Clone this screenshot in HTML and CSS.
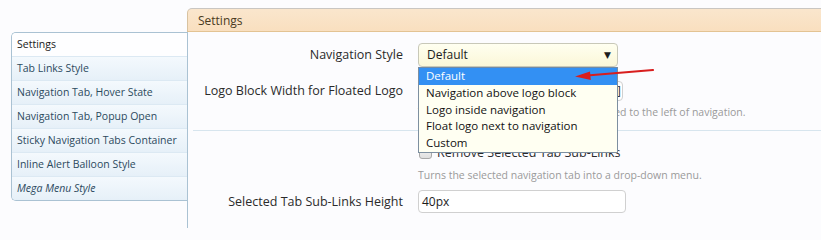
FILE: index.html
```html
<!DOCTYPE html>
<html>
<head>
<meta charset="utf-8">
<link rel="stylesheet" href="styles.css">
</head>
<body>
<div class="page">
  <div class="tabbar"><div class="tabhead">Settings</div></div>
  <div class="main">
    <ul class="sidebar">
      <li class="active">Settings</li>
      <li>Tab Links Style</li>
      <li>Navigation Tab, Hover State</li>
      <li>Navigation Tab, Popup Open</li>
      <li>Sticky Navigation Tabs Container</li>
      <li>Inline Alert Balloon Style</li>
      <li class="italic">Mega Menu Style</li>
    </ul>
    <div class="content">
      <div class="row row1">
        <div class="label">Navigation Style</div>
        <div class="control">
          <div class="select"><span>Default</span><span class="caret">&#9660;</span></div>
        </div>
      </div>
      <div class="row row2">
        <div class="label">Logo Block Width for Floated Logo</div>
        <div class="control">
          <div class="input small"><span class="spin">]</span></div>
          <div class="hint">This applies only if the logo block is floated to the left of navigation.</div>
        </div>
      </div>
      <div class="sep"></div>
      <div class="row row3">
        <div class="label"></div>
        <div class="control">
          <label class="check"><span class="box"></span>Remove Selected Tab Sub-Links</label>
          <div class="hint">Turns the selected navigation tab into a drop-down menu.</div>
        </div>
      </div>
      <div class="row row4">
        <div class="label">Selected Tab Sub-Links Height</div>
        <div class="control">
          <div class="input">40px</div>
        </div>
      </div>
    </div>
  </div>
  <ul class="dropdown">
    <li class="hl">Default</li>
    <li>Navigation above logo block</li>
    <li>Logo inside navigation</li>
    <li>Float logo next to navigation</li>
    <li>Custom</li>
  </ul>
  <svg class="arrow" width="90" height="16" viewBox="0 0 90 16">
    <path d="M80 3 L14 8.5" stroke="#d81e1e" stroke-width="2.2" fill="none" stroke-linecap="round"/>
    <path d="M2 9.5 L17 4.5 L17.8 13 Z" fill="#d81e1e"/>
  </svg>
</div>
</body>
</html>
```
FILE: styles.css
```css
html, body {
  margin: 0;
  padding: 0;
  background: #fcfcfe;
  font-family: "Open Sans", "DejaVu Sans", sans-serif;
  color: #2b2b2b;
}
.page {
  position: relative;
  width: 821px;
  height: 228px;
  overflow: hidden;
  padding-top: 8px;
  box-sizing: border-box;
}
.tabbar {
  padding-left: 187px;
}
.tabhead {
  height: 24px;
  line-height: 23px;
  border-top: 1px solid #c9c6c2;
  border-left: 1px solid #d8c2a0;
  border-top-left-radius: 5px;
  background: linear-gradient(#fae6cd, #f9dfbf);
  border-bottom: 1px solid #e3c393;
  padding-left: 10px;
  font-size: 12px;
  color: #4a3a22;
  box-sizing: border-box;
}
.main {
  display: flex;
  align-items: flex-start;
}
.sidebar {
  list-style: none;
  margin: 0 0 0 11px;
  padding: 0;
  width: 176px;
  border: 1px solid #aac2d3;
  border-right: none;
  border-radius: 5px 0 0 5px;
  overflow: hidden;
  background: #eef5fb;
  box-sizing: border-box;
}
.sidebar li {
  height: 24px;
  line-height: 23px;
  padding-left: 5px;
  font-size: 10.5px;
  color: #2c4a5e;
  border-top: 1px solid #dce9f3;
  box-sizing: border-box;
  background: linear-gradient(#f4f9fd, #e6f0f8);
  white-space: nowrap;
}
.sidebar li:first-child { border-top: none; height: 23px; }
.sidebar li.active {
  background: #fefeff;
  color: #1a1a1a;
}
.sidebar li.italic { font-style: italic; }
.content {
  flex: 1;
  height: 196px;
  border-left: 1px solid #aac2d3;
  box-sizing: border-box;
}
.row {
  display: flex;
  align-items: flex-start;
}
.label {
  width: 215px;
  text-align: right;
  font-size: 12.5px;
  color: #2b2b2b;
  flex: none;
}
.control {
  margin-left: 15px;
}
.row1 { padding-top: 11px; }
.row1 .label { line-height: 24px; }
.select {
  width: 200px;
  height: 24px;
  box-sizing: border-box;
  border: 1px solid #c8c8b8;
  border-radius: 4px;
  background: linear-gradient(#fffff0, #fbf7d8);
  font-size: 12px;
  line-height: 22px;
  padding-left: 8px;
  padding-right: 6px;
  display: flex;
  justify-content: space-between;
  color: #1c1c1c;
}
.caret { font-size: 9px; }
.row2 { padding-top: 14px; }
.row2 .label { line-height: 20px; }
.input {
  width: 208px;
  height: 23px;
  box-sizing: border-box;
  border: 1px solid #d0d0d0;
  border-radius: 4px;
  background: #fff;
  font-size: 12px;
  line-height: 21px;
  padding-left: 3px;
  color: #1c1c1c;
}
.input.small {
  width: 205px;
  height: 20px;
  text-align: right;
  padding-right: 1px;
  line-height: 17px;
}
.spin { font-size: 12px; color: #333; }
.hint {
  font-size: 10.5px;
  color: #9a9a9a;
  margin-top: 4px;
  white-space: nowrap;
}
.sep {
  height: 1px;
  background: #d7e5ee;
  margin: 11px 0 0 5px;
}
.row3 { padding-top: 15px; }
.check {
  display: flex;
  align-items: center;
  font-size: 12.5px;
  color: #2b2b2b;
  line-height: 14px;
}
.box {
  width: 11px;
  height: 10px;
  border: 1px solid #a8a8a8;
  border-radius: 3px;
  background: linear-gradient(#f4f4f4, #dedede);
  margin: 0 5px 0 1px;
}
.row3 .hint { margin-top: 8px; }
.row4 { padding-top: 8px; }
.row4 .label { line-height: 23px; }
.dropdown {
  position: absolute;
  left: 418px;
  top: 67px;
  width: 200px;
  margin: 0;
  padding: 0 0 1px;
  list-style: none;
  border: 1px solid #7d8fa0;
  border-top: 1px solid #6f8aa8;
  background: #fffff2;
  box-sizing: border-box;
}
.dropdown li {
  height: 16.5px;
  line-height: 16px;
  font-size: 11.5px;
  padding-left: 7px;
  color: #111;
  white-space: nowrap;
}
.dropdown li.hl {
  background: #3390f3;
  color: #fff;
  height: 17px;
}
.arrow {
  position: absolute;
  left: 573px;
  top: 67px;
}
```
